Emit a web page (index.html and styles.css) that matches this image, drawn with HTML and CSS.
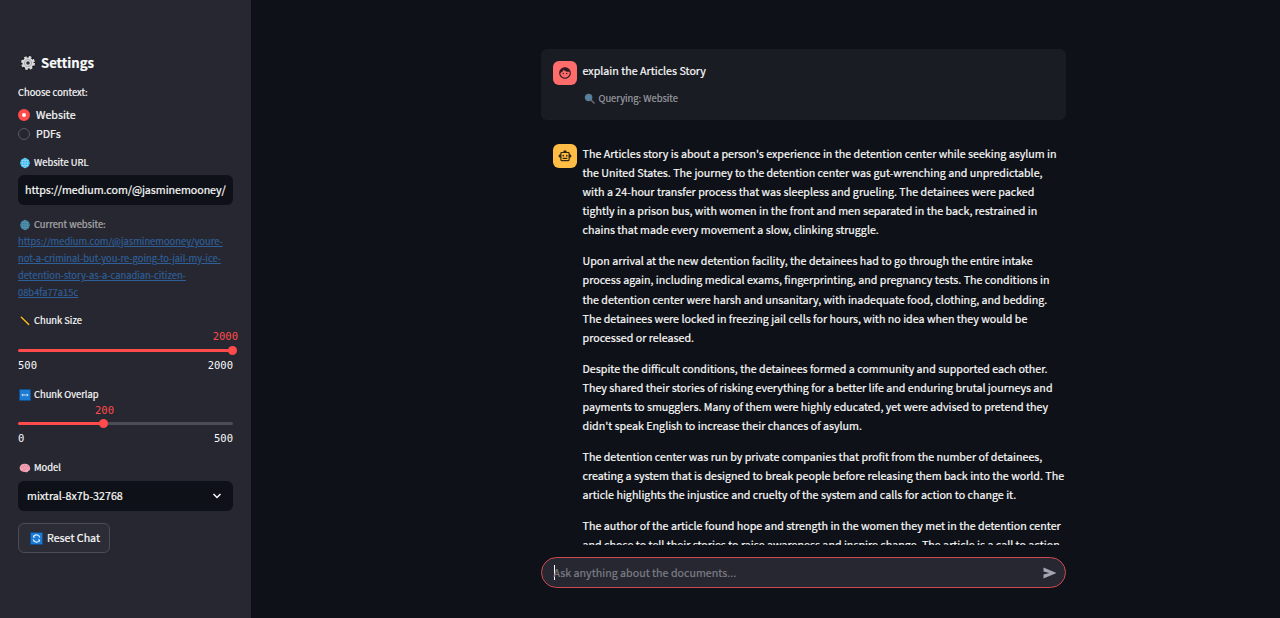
FILE: index.html
```html
<!DOCTYPE html>
<html lang="en">
<head>
<meta charset="utf-8">
<title>Document chat</title>
<link rel="stylesheet" href="styles.css">
</head>
<body>
<div class="app">
  <aside class="sidebar">
    <h1 class="title">
      <svg class="gear" viewBox="0 0 16 16"><circle cx="8" cy="8" r="7.400" fill="#17181d"/><circle cx="8" cy="8" r="5.600" fill="#d9dbdc"/><circle cx="8" cy="8" r="6" fill="none" stroke="#d9dbdc" stroke-width="2" stroke-dasharray="2.700 2.010"/><circle cx="8" cy="8" r="3.600" fill="none" stroke="#a6a9ab" stroke-width="1"/><circle cx="8" cy="8" r="1.800" fill="#303136"/></svg>
      <span>Settings</span>
    </h1>
    <div class="label context-label">Choose context:</div>
    <div class="radio"><i class="dot on"></i><span>Website</span></div>
    <div class="radio"><i class="dot"></i><span>PDFs</span></div>

    <div class="label url-label">
      <svg class="emoji" viewBox="0 0 12 12"><circle cx="6" cy="6" r="4.8" fill="#35b6ee"/><path d="M1.2 6h9.6M6 1.2v9.6M2.2 3.5h7.6M2.2 8.5h7.6" stroke="#a2e3fa" stroke-width=".6" fill="none"/><ellipse cx="6" cy="6" rx="2.5" ry="4.8" fill="none" stroke="#a2e3fa" stroke-width=".6"/></svg>
      <span>Website URL</span>
    </div>
    <div class="field url"><span>https://medium.com/@jasminemooney/</span></div>

    <div class="label current">
      <svg class="emoji" viewBox="0 0 12 12"><circle cx="6" cy="6" r="4.8" fill="#35b6ee"/><path d="M1.2 6h9.6M6 1.2v9.6M2.2 3.5h7.6M2.2 8.5h7.6" stroke="#a2e3fa" stroke-width=".6" fill="none"/><ellipse cx="6" cy="6" rx="2.5" ry="4.8" fill="none" stroke="#a2e3fa" stroke-width=".6"/></svg>
      <span>Current website:</span>
    </div>
    <a class="link">https://medium.com/@jasminemooney/youre-<br>not-a-criminal-but-you-re-going-to-jail-my-ice-<br>detention-story-as-a-canadian-citizen-<br>08b4fa77a15c</a>

    <div class="label size-label">
      <svg class="emoji" viewBox="0 0 12 12"><path d="M1.8 1.7 10.2 10" stroke="#14120d" stroke-width="3"/><path d="M1.9 1.8 10.1 9.9" stroke="#f2b72e" stroke-width="1.6"/></svg>
      <span>Chunk Size</span>
    </div>
    <div class="value full">2000</div>
    <div class="track full"><i class="thumb"></i></div>
    <div class="range"><span>500</span><span>2000</span></div>

    <div class="label overlap-label">
      <svg class="emoji" viewBox="0 0 12 12"><path d="M.4.4h11.2v11.2H.4z" fill="#1b7bd5" stroke="#0b4687" stroke-width=".6"/><path d="M3 6h6M4 4.800 2.800 6 4 7.200M8 4.800 9.200 6 8 7.200" stroke="#e8f5ff" stroke-width=".8" fill="none"/></svg>
      <span>Chunk Overlap</span>
    </div>
    <div class="value part">200</div>
    <div class="track part"><i class="thumb"></i></div>
    <div class="range"><span>0</span><span>500</span></div>

    <div class="label model-label">
      <svg class="emoji" viewBox="0 0 12 12"><path d="M.8 7C.3 4.5 2 2 5 1.8c3-.5 5.5 1 6 3.4.6 2-.2 3.7-1.8 3.7-.4 1.5-2 1.8-3 1C4 10 1 9 .8 7z" fill="#f4a3b5"/><path d="M2 6c1-1.500 2-.5 3-1.500M5 2.500c0 1.500 2 1.500 2.500 2.500M3.500 8c1.500-1 2.500 0 4-1.500M8.500 3.500c0 1.500 1 1.500 1 3" fill="none" stroke="#d7738d" stroke-width=".7"/></svg>
      <span>Model</span>
    </div>
    <div class="field select"><span>mixtral-8x7b-32768</span>
      <svg class="chevron" viewBox="0 0 10 8"><path d="M1.500 2 5 5.500 8.500 2" fill="none" stroke="#fafafa" stroke-width="1.500"/></svg>
    </div>
    <div class="reset">
      <svg class="sync" viewBox="0 0 13 13"><path d="M.4.4h12.200v12.200H.4z" fill="#1b7bd5" stroke="#0b4687" stroke-width=".8"/><path d="M3.200 7.500A3.400 3.400 0 0 0 9 9M9.800 5.500A3.400 3.400 0 0 0 4 4" fill="none" stroke="#e8f5ff" stroke-width="1.100"/><path d="M3 3v2.500h2.400zM10 10V7.500H7.600z" fill="#e8f5ff"/></svg>
      <span>Reset Chat</span>
    </div>
  </aside>

  <main class="main">
    <div class="scroll">
      <section class="message user">
        <div class="avatar red">
          <svg viewBox="0 0 24 24"><path d="M10.250 13a1.250 1.250 0 1 1-2.500 0 1.250 1.250 0 0 1 2.500 0zM15 11.750a1.250 1.250 0 1 0 0 2.500 1.250 1.250 0 0 0 0-2.500zM22 12c0 5.520-4.480 10-10 10S2 17.520 2 12 6.480 2 12 2s10 4.480 10 10zm-2 0c0-.780-.120-1.530-.330-2.240-.700.150-1.420.240-2.170.240-3.130 0-5.920-1.440-7.760-3.690A10 10 0 0 1 4 11.860V12c0 4.410 3.590 8 8 8s8-3.590 8-8z" fill="#311b1f"/></svg>
        </div>
        <div class="body">
          <p>explain the Articles Story</p>
          <div class="query">
            <svg class="lens" viewBox="0 0 12 12"><path d="m6.800 6.800 3.800 3.700" stroke="#63666d" stroke-width="1.700"/><circle cx="4.600" cy="4.500" r="3.200" fill="#4f83a8" stroke="#657987" stroke-width="1.200"/></svg>
            <span>Querying: Website</span>
          </div>
        </div>
      </section>
      <section class="message bot">
        <div class="avatar amber">
          <svg viewBox="0 0 24 24"><path fill-rule="evenodd" d="M20 9V7c0-1.100-.900-2-2-2h-3c0-1.660-1.340-3-3-3S9 3.340 9 5H6c-1.100 0-2 .900-2 2v2c-1.660 0-3 1.340-3 3s1.340 3 3 3v4c0 1.100.900 2 2 2h12c1.100 0 2-.900 2-2v-4c1.660 0 3-1.340 3-3s-1.340-3-3-3zm-2 10H6V7h12v12zM9 13a1.500 1.500 0 1 1 0-3 1.500 1.500 0 0 1 0 3zm6 0a1.500 1.500 0 1 1 0-3 1.500 1.500 0 0 1 0 3zM8 15h8v2H8z" fill="#31260f"/></svg>
        </div>
        <div class="body">
          <p>The Articles story is about a person's experience in the detention center while seeking asylum in<br>the United States. The journey to the detention center was gut-wrenching and unpredictable,<br>with a 24-hour transfer process that was sleepless and grueling. The detainees were packed<br>tightly in a prison bus, with women in the front and men separated in the back, restrained in<br>chains that made every movement a slow, clinking struggle.</p>
          <p>Upon arrival at the new detention facility, the detainees had to go through the entire intake<br>process again, including medical exams, fingerprinting, and pregnancy tests. The conditions in<br>the detention center were harsh and unsanitary, with inadequate food, clothing, and bedding.<br>The detainees were locked in freezing jail cells for hours, with no idea when they would be<br>processed or released.</p>
          <p>Despite the difficult conditions, the detainees formed a community and supported each other.<br>They shared their stories of risking everything for a better life and enduring brutal journeys and<br>payments to smugglers. Many of them were highly educated, yet were advised to pretend they<br>didn't speak English to increase their chances of asylum.</p>
          <p>The detention center was run by private companies that profit from the number of detainees,<br>creating a system that is designed to break people before releasing them back into the world. The<br>article highlights the injustice and cruelty of the system and calls for action to change it.</p>
          <p>The author of the article found hope and strength in the women they met in the detention center<br>and chose to tell their stories to raise awareness and inspire change. The article is a call to action</p>
        </div>
      </section>
    </div>
    <div class="prompt">
      <i class="caret"></i><span>Ask anything about the documents...</span>
      <svg class="send" viewBox="0 0 14 12"><path d="M.500.500 13.500 6 .500 11.500V7.500L6.500 6 .500 4.500z" fill="#a3a5b2"/></svg>
    </div>
  </main>
</div>
</body>
</html>
```
FILE: styles.css
```css
* { box-sizing: border-box; }
body {
  margin: 0;
  background: #0e1117;
  color: #fafafa;
  font-family: "Noto Sans CJK SC", "Noto Sans", sans-serif;
  font-size: 10.7px;
  line-height: 19.1px;
  -webkit-text-stroke: .2px;
}
svg { display: block; flex: none; }
.app { display: flex; height: 618px; overflow: hidden; }
.sidebar {
  width: 251px;
  flex: none;
  padding: 53px 18px 0;
  background: #262730;
  white-space: nowrap;
}
.title {
  display: flex;
  align-items: center;
  gap: 5px;
  height: 20px;
  margin: 0;
  padding-left: 2px;
  font-size: 13.1px;
  font-weight: 600;
}
.gear { width: 16px; height: 16px; }
.label {
  display: flex;
  align-items: center;
  gap: 3px;
  height: 16px;
  font-size: 9.35px;
}
.emoji { width: 12px; height: 12px; margin-left: 1px; }
.context-label { margin: 12px 0 4px; }
.radio { display: flex; align-items: center; gap: 6px; height: 19px; }
.dot {
  width: 12px;
  height: 12px;
  border: 1px solid #595a63;
  border-radius: 50%;
  background: #262730;
}
.dot.on { border: 4px solid #ff4b4b; background: #fff; }
.url-label { margin-top: 12px; }
.field {
  display: flex;
  align-items: center;
  height: 30px;
  border-radius: 6px;
  background: #0e1117;
}
.url { margin-top: 4px; padding: 0 7px; overflow: hidden; }
.url span { letter-spacing: -.04px; }
.current { margin-top: 12px; opacity: .6; }
.link {
  display: block;
  color: #2f5f98;
  font-size: 9.35px;
  line-height: 17px;
  text-decoration: underline;
}
.size-label { margin-top: 12px; }
.value, .range {
  font-family: "DejaVu Sans Mono", monospace;
  font-size: 10.5px;
  -webkit-text-stroke: 0;
}
.value { height: 14px; line-height: 14px; color: #ff4b4b; }
.value.full { margin-right: -5px; text-align: right; }
.value.part { padding-left: 77px; }
.track {
  display: flex;
  align-items: center;
  height: 3px;
  margin-top: 6px;
  border-radius: 2px;
  background: #ff4b4b;
}
.track.part { margin-top: 5px; background: linear-gradient(90deg, #ff4b4b 40%, #4b4c55 40%); }
.thumb { width: 9px; height: 9px; flex: none; border-radius: 50%; background: #ff4b4b; }
.full .thumb { margin-left: 210px; }
.part .thumb { margin-left: 81px; }
.range { display: flex; justify-content: space-between; height: 16px; line-height: 16px; margin-top: 5px; }
.overlap-label { margin-top: 14px; }
.model-label { margin-top: 14px; }
.select { justify-content: space-between; margin-top: 5px; padding: 0 11px 0 9px; }
.chevron { width: 10px; height: 8px; }
.reset {
  display: flex;
  align-items: center;
  gap: 4px;
  width: 92px;
  height: 30px;
  margin-top: 12px;
  padding-left: 11px;
  border: 1px solid #4b4c55;
  border-radius: 6px;
  background: #2b2c36;
}
.sync { width: 13px; height: 13px; }

.main { width: 525.500px; margin-left: 289.500px; }
.scroll { height: 545px; padding-top: 49px; overflow: hidden; white-space: nowrap; }
.message { display: flex; gap: 6px; padding: 12px 0 12px 12px; border-radius: 6px; }
.message p { margin: 0 0 11.9px; }
.user { height: 71px; background: #1a1c24; }
.bot { margin-top: 12px; }
.avatar {
  display: grid;
  place-items: center;
  width: 24px;
  height: 24px;
  flex: none;
  border-radius: 6px;
}
.avatar svg { width: 14px; height: 14px; }
.red { background: #ff6c6c; }
.amber { background: #ffbd45; }
.query { display: flex; align-items: center; gap: 3px; height: 16px; margin-top: -1px; font-size: 9.35px; color: #9c9da1; }
.lens { width: 12px; height: 12px; margin-left: 1px; }
.prompt {
  display: flex;
  align-items: center;
  height: 31px;
  margin-top: 12px;
  padding: 0 8px 0 12px;
  border: 1px solid #cf4952;
  border-radius: 16px;
  background: #262730;
  color: #7d7e86;
}
.caret { width: 1px; height: 15px; margin-right: -1px; background: #fafafa; }
.send { width: 14px; height: 12px; margin-left: auto; }
```
